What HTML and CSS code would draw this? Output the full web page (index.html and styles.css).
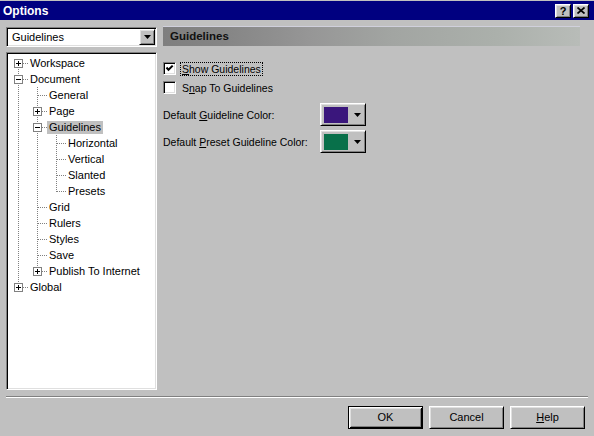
FILE: index.html
```html
<!DOCTYPE html>
<html>
<head>
<meta charset="utf-8">
<link rel="stylesheet" href="styles.css">
</head>
<body>
<div class="window">
  <div class="titlebar">
    <span class="title">Options</span>
    <div class="caption-btns">
      <span class="cbtn raised">?</span>
      <span class="cbtn raised"><svg width="8" height="7" viewBox="0 0 8 7"><path d="M0.5 0.5L7.5 6.5M7.5 0.5L0.5 6.5" stroke="#000" stroke-width="1.7" fill="none"/></svg></span>
    </div>
  </div>

  <div class="main">
    <div class="left">
      <div class="combo sunken">
        <span class="combo-text">Guidelines</span>
        <span class="combo-btn raised"><svg width="7" height="4" viewBox="0 0 7 4"><path d="M0 0H7L3.5 4Z" fill="#000"/></svg></span>
      </div>
      <div class="tree sunken">
        <div class="row"><span class="c tee top"><svg class="pm" width="9" height="9" viewBox="0 0 9 9"><rect x="0.5" y="0.5" width="8" height="8" fill="#fff" stroke="#808080"/><path d="M2 4.5H7M4.5 2V7" stroke="#000"/></svg></span><span class="lbl">Workspace</span></div>
        <div class="row"><span class="c tee"><svg class="pm" width="9" height="9" viewBox="0 0 9 9"><rect x="0.5" y="0.5" width="8" height="8" fill="#fff" stroke="#808080"/><path d="M2 4.5H7" stroke="#000"/></svg></span><span class="lbl">Document</span></div>
        <div class="row"><span class="c pipe"></span><span class="c tee"></span><span class="lbl">General</span></div>
        <div class="row"><span class="c pipe"></span><span class="c tee"><svg class="pm" width="9" height="9" viewBox="0 0 9 9"><rect x="0.5" y="0.5" width="8" height="8" fill="#fff" stroke="#808080"/><path d="M2 4.5H7M4.5 2V7" stroke="#000"/></svg></span><span class="lbl">Page</span></div>
        <div class="row"><span class="c pipe"></span><span class="c tee"><svg class="pm" width="9" height="9" viewBox="0 0 9 9"><rect x="0.5" y="0.5" width="8" height="8" fill="#fff" stroke="#808080"/><path d="M2 4.5H7" stroke="#000"/></svg></span><span class="lbl selected">Guidelines</span></div>
        <div class="row"><span class="c pipe"></span><span class="c pipe"></span><span class="c tee"></span><span class="lbl">Horizontal</span></div>
        <div class="row"><span class="c pipe"></span><span class="c pipe"></span><span class="c tee"></span><span class="lbl">Vertical</span></div>
        <div class="row"><span class="c pipe"></span><span class="c pipe"></span><span class="c tee"></span><span class="lbl">Slanted</span></div>
        <div class="row"><span class="c pipe"></span><span class="c pipe"></span><span class="c tee elbow"></span><span class="lbl">Presets</span></div>
        <div class="row"><span class="c pipe"></span><span class="c tee"></span><span class="lbl">Grid</span></div>
        <div class="row"><span class="c pipe"></span><span class="c tee"></span><span class="lbl">Rulers</span></div>
        <div class="row"><span class="c pipe"></span><span class="c tee"></span><span class="lbl">Styles</span></div>
        <div class="row"><span class="c pipe"></span><span class="c tee"></span><span class="lbl">Save</span></div>
        <div class="row"><span class="c pipe"></span><span class="c tee elbow"><svg class="pm" width="9" height="9" viewBox="0 0 9 9"><rect x="0.5" y="0.5" width="8" height="8" fill="#fff" stroke="#808080"/><path d="M2 4.5H7M4.5 2V7" stroke="#000"/></svg></span><span class="lbl">Publish To Internet</span></div>
        <div class="row"><span class="c tee elbow"><svg class="pm" width="9" height="9" viewBox="0 0 9 9"><rect x="0.5" y="0.5" width="8" height="8" fill="#fff" stroke="#808080"/><path d="M2 4.5H7M4.5 2V7" stroke="#000"/></svg></span><span class="lbl">Global</span></div>
      </div>
    </div>

    <div class="right">
      <div class="header">Guidelines</div>
      <div class="options">
        <div class="check-row">
          <span class="checkbox sunken"><svg width="9" height="9" viewBox="0 0 9 9"><path d="M1.5 3.5L3.5 5.8L7.7 1.6" stroke="#000" stroke-width="2" fill="none"/></svg></span>
          <span class="check-label focus"><u>S</u>how Guidelines</span>
        </div>
        <div class="check-row">
          <span class="checkbox sunken"></span>
          <span class="check-label">S<u>n</u>ap To Guidelines</span>
        </div>
        <div class="color-rows">
          <div class="color-row">
            <span class="color-label">Default <u>G</u>uideline Color:</span>
            <span class="color-btn raised"><span class="swatch purple"></span><svg width="7" height="4" viewBox="0 0 7 4"><path d="M0 0H7L3.5 4Z" fill="#000"/></svg></span>
          </div>
          <div class="color-row">
            <span class="color-label">Default <u>P</u>reset Guideline Color:</span>
            <span class="color-btn raised"><span class="swatch green"></span><svg width="7" height="4" viewBox="0 0 7 4"><path d="M0 0H7L3.5 4Z" fill="#000"/></svg></span>
          </div>
        </div>
      </div>
    </div>
  </div>

  <div class="separator"></div>

  <div class="buttons">
    <span class="btn default">OK</span>
    <span class="btn raised">Cancel</span>
    <span class="btn raised"><u>H</u>elp</span>
  </div>
</div>
</body>
</html>
```
FILE: styles.css
```css
* { box-sizing: border-box; }
html, body { margin: 0; padding: 0; }
body {
  width: 594px;
  height: 436px;
  overflow: hidden;
  font-family: "Liberation Sans", Arial, sans-serif;
  font-size: 11px;
  color: #000;
  background: #c0c0c0;
}
.window {
  width: 594px;
  height: 436px;
  background: #c0c0c0;
  padding-top: 1px;
  display: flex;
  flex-direction: column;
  --v: repeating-linear-gradient(to bottom, #808080 0 1px, transparent 1px 2px);
  --h: repeating-linear-gradient(to right, #808080 0 1px, transparent 1px 2px);
}
.sunken {
  border: 1px solid;
  border-color: #808080 #fff #fff #808080;
  box-shadow: inset 1px 1px #000, inset -1px -1px #dfdfdf;
}
.raised {
  border: 1px solid;
  border-color: #fff #000 #000 #fff;
  box-shadow: inset 1px 1px #dfdfdf, inset -1px -1px #808080;
  background: #c0c0c0;
}

/* title bar */
.titlebar {
  height: 19px;
  background: #000080;
  display: flex;
  align-items: center;
  justify-content: space-between;
  padding: 0 5px 0 3px;
}
.title {
  color: #fff;
  font-weight: bold;
  font-size: 12px;
  line-height: 14px;
}
.caption-btns { display: flex; gap: 2px; }
.cbtn {
  width: 16px;
  height: 14px;
  display: flex;
  align-items: center;
  justify-content: center;
  font-weight: bold;
  font-size: 11px;
  line-height: 12px;
}

/* main */
.main {
  height: 370px;
  display: flex;
  gap: 6px;
  padding: 6px 14px 0 6px;
}
.left {
  width: 151px;
  display: flex;
  flex-direction: column;
  gap: 5px;
  padding-top: 1px;
}
.combo {
  height: 20px;
  background: #fff;
  display: flex;
  align-items: center;
  justify-content: space-between;
  padding: 1px;
}
.combo-text { padding-left: 4px; line-height: 14px; }
.combo-btn {
  width: 16px;
  height: 16px;
  display: flex;
  align-items: center;
  justify-content: center;
}
.tree {
  height: 338px;
  background: #fff;
  padding: 2px 0 0 2px;
}
.row {
  display: flex;
  height: 16px;
  align-items: flex-start;
}
.c {
  width: 19px;
  height: 16px;
  flex: none;
  background-repeat: no-repeat;
}
.pipe {
  background-image: var(--v);
  background-size: 1px 16px;
  background-position: 9px 0;
}
.tee {
  background-image: var(--v), var(--h);
  background-size: 1px 16px, 9px 1px;
  background-position: 9px 0, 10px 8px;
}
.tee.elbow {
  background-size: 1px 9px, 9px 1px;
  background-position: 9px 0, 10px 8px;
}
.tee.top {
  background-size: 1px 8px, 9px 1px;
  background-position: 9px 8px, 10px 8px;
}
.pm { display: block; margin: 4px 0 0 5px; }
.lbl {
  margin-top: 2px;
  line-height: 13px;
  height: 13px;
  padding: 0 2px;
  white-space: nowrap;
}
.lbl.selected { background: #c0c0c0; }

/* right panel */
.right {
  width: 417px;
  display: flex;
  flex-direction: column;
}
.header {
  height: 20px;
  border-top: 1px solid #d0d0dc;
  background: linear-gradient(to right, #7f7f7f 0%, #858585 15%, #969696 35%, #a2a5a2 55%, #abb0ab 80%, #b8bcb8 100%);
  font-weight: bold;
  font-size: 11.5px;
  line-height: 19px;
  padding-left: 7px;
  color: #111;
}
.options {
  display: flex;
  flex-direction: column;
  gap: 6px;
  padding-top: 16px;
  font-size: 10.5px;
}
.check-row {
  display: flex;
  align-items: center;
  height: 13px;
}
.checkbox {
  width: 13px;
  height: 13px;
  background: #fff;
  display: flex;
  align-items: center;
  justify-content: center;
  flex: none;
}
.checkbox svg { display: block; }
.check-label {
  margin-left: 4px;
  padding: 0 1px;
  height: 14px;
  line-height: 12px;
  border: 1px solid transparent;
  white-space: nowrap;
}
.check-label.focus { border: 1px dotted #000; }
.color-rows {
  display: flex;
  flex-direction: column;
  gap: 4px;
  margin-top: 3px;
}
.color-row {
  display: grid;
  grid-template-columns: 157px 46px;
  align-items: center;
  height: 23px;
}
.color-label { white-space: nowrap; }
.color-btn {
  width: 46px;
  height: 23px;
  display: flex;
  align-items: center;
  padding-left: 3px;
}
.color-btn svg { margin-left: 6px; }
.swatch {
  width: 24px;
  height: 16px;
}
.swatch.purple { background: #3a167c; }
.swatch.green { background: #08704a; }

/* bottom */
.separator {
  margin: 6px 6px 0 6px;
  height: 2px;
  border-top: 1px solid #808080;
  border-bottom: 1px solid #fff;
}
.buttons {
  display: flex;
  justify-content: flex-end;
  gap: 6px;
  padding: 8px 9px 0 0;
}
.btn {
  width: 75px;
  height: 23px;
  display: flex;
  align-items: center;
  justify-content: center;
  line-height: 13px;
}
.btn.default {
  border: 1px solid #000;
  background: #c0c0c0;
  box-shadow: inset 1px 1px #fff, inset -1px -1px #000, inset 2px 2px #dfdfdf, inset -2px -2px #808080;
}
```
